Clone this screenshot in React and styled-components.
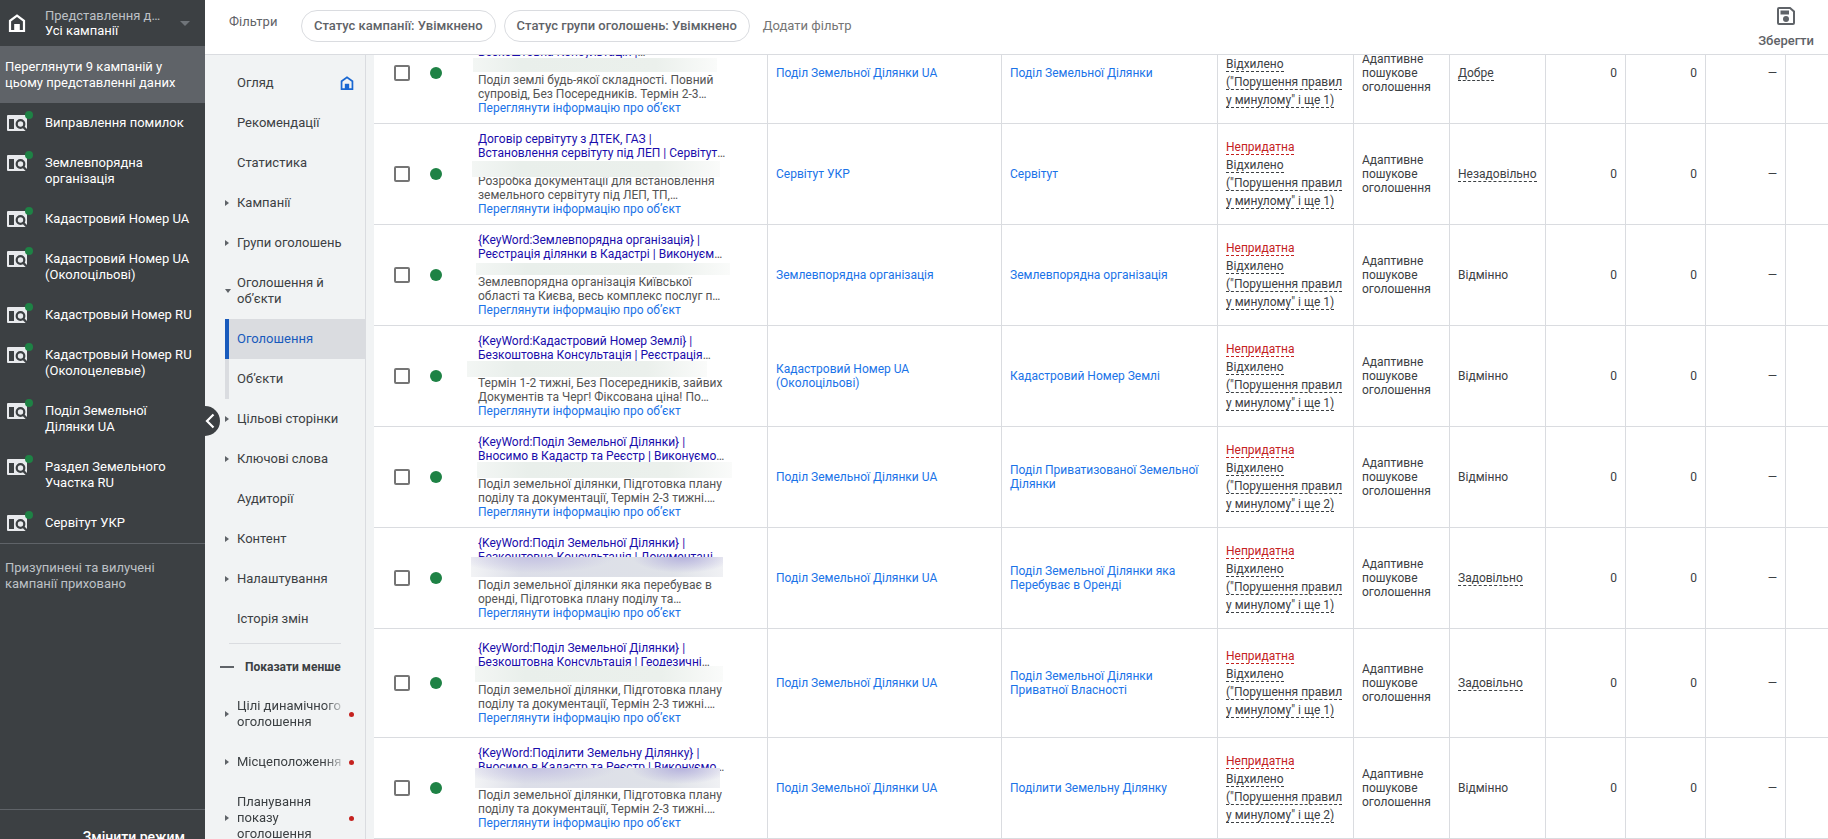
import React from "react";
import styled, { createGlobalStyle, css } from "styled-components";

const campaigns = [
  ["Виправлення помилок"],
  ["Землевпорядна", "організація"],
  ["Кадастровий Номер UA"],
  ["Кадастровий Номер UA", "(Околоцільові)"],
  ["Кадастровый Номер RU"],
  ["Кадастровый Номер RU", "(Околоцелевые)"],
  ["Поділ Земельної", "Ділянки UA"],
  ["Раздел Земельного", "Участка RU"],
  ["Сервітут УКР"],
];

const pages = [
  { label: ["Огляд"], home: true },
  { label: ["Рекомендації"] },
  { label: ["Статистика"] },
  { label: ["Кампанії"], arrow: "right" },
  { label: ["Групи оголошень"], arrow: "right" },
  { label: ["Оголошення й", "об’єкти"], arrow: "down" },
  { label: ["Оголошення"], child: true, active: true },
  { label: ["Об’єкти"], child: true },
  { label: ["Цільові сторінки"], arrow: "right" },
  { label: ["Ключові слова"], arrow: "right" },
  { label: ["Аудиторії"] },
  { label: ["Контент"], arrow: "right" },
  { label: ["Налаштування"], arrow: "right" },
  { label: ["Історія змін"] },
];

const morePages = [
  { label: ["Цілі динамічного", "оголошення"], arrow: "right", isNew: true },
  { label: ["Місцеположення"], arrow: "right", isNew: true },
  { label: ["Планування", "показу", "оголошення"], arrow: "right", isNew: true },
];

const ads = [
  {
    title: ["{KeyWord:Поділ Землі} |", "Безкоштовна Консультація |"],
    text: ["Поділ землі будь-якої складності. Повний", "супровід, Без Посередників. Термін 2-3…"],
    campaign: ["Поділ Земельної Ділянки UA"],
    group: ["Поділ Земельної Ділянки"],
    more: 1,
    strength: "Добре",
    hint: true,
    patch: { x: -5, y: 27, w: 244, h: 14 },
  },
  {
    title: ["Договір сервітуту з ДТЕК, ГАЗ |", "Встановлення сервітуту під ЛЕП | Сервітут"],
    text: ["Розробка документації для встановлення", "земельного сервітуту під ЛЕП, ТП,…"],
    campaign: ["Сервітут УКР"],
    group: ["Сервітут"],
    more: 1,
    strength: "Незадовільно",
    hint: true,
    patch: { x: -6, y: 29, w: 248, h: 16 },
  },
  {
    title: ["{KeyWord:Землевпорядна організація} |", "Реєстрація ділянки в Кадастрі | Виконуєм"],
    text: ["Землевпорядна організація Київської", "області та Києва, весь комплекс послуг п…"],
    campaign: ["Землевпорядна організація"],
    group: ["Землевпорядна організація"],
    more: 1,
    strength: "Відмінно",
    patch: { x: -2, y: 30, w: 254, h: 12 },
  },
  {
    title: ["{KeyWord:Кадастровий Номер Землі} |", "Безкоштовна Консультація | Реєстрація"],
    text: ["Термін 1-2 тижні, Без Посередників, зайвих", "Документів та Черг! Фіксована ціна! По…"],
    campaign: ["Кадастровий Номер UA", "(Околоцільові)"],
    group: ["Кадастровий Номер Землі"],
    more: 1,
    strength: "Відмінно",
    patch: { x: -11, y: 27, w: 240, h: 16 },
  },
  {
    title: ["{KeyWord:Поділ Земельної Ділянки} |", "Вносимо в Кадастр та Реєстр | Виконуємо"],
    text: ["Поділ земельної ділянки, Підготовка плану", "поділу та документації, Термін 2-3 тижні.…"],
    campaign: ["Поділ Земельної Ділянки UA"],
    group: ["Поділ Приватизованої Земельної", "Ділянки"],
    more: 2,
    strength: "Відмінно",
    patch: { x: -1, y: 27, w: 255, h: 16 },
  },
  {
    title: ["{KeyWord:Поділ Земельної Ділянки} |", "Безкоштовна Консультація | Документаці"],
    text: ["Поділ земельної ділянки яка перебуває в", "оренді, Підготовка плану поділу та…"],
    campaign: ["Поділ Земельної Ділянки UA"],
    group: ["Поділ Земельної Ділянки яка", "Перебуває в Оренді"],
    more: 1,
    strength: "Задовільно",
    hint: true,
    patch: { x: -7, y: 21, w: 252, h: 20, violet: true },
  },
  {
    title: ["{KeyWord:Поділ Земельної Ділянки} |", "Безкоштовна Консультація | Геодезичні"],
    text: ["Поділ земельної ділянки, Підготовка плану", "поділу та документації, Термін 2-3 тижні.…"],
    campaign: ["Поділ Земельної Ділянки UA"],
    group: ["Поділ Земельної Ділянки", "Приватної Власності"],
    more: 1,
    strength: "Задовільно",
    hint: true,
    tall: true,
    patch: { x: -3, y: 25, w: 248, h: 16 },
  },
  {
    title: ["{KeyWord:Поділити Земельну Ділянку} |", "Вносимо в Кадастр та Реєстр | Виконуємо"],
    text: ["Поділ земельної ділянки, Підготовка плану", "поділу та документації, Термін 2-3 тижні.…"],
    campaign: ["Поділ Земельної Ділянки UA"],
    group: ["Поділити Земельну Ділянку"],
    more: 2,
    strength: "Відмінно",
    patch: { x: -3, y: 22, w: 245, h: 20, violet: true },
  },
];

const Lines = ({ items }) => items.map((line) => <Line key={line}>{line}</Line>);

const HomeIcon = ({ size }) => (
  <svg width={size} height={size} viewBox="0 0 18 18" fill="none" aria-hidden="true">
    <path d="M2 17V6.8L9 1.6l7 5.2V17z" stroke="currentColor" strokeWidth="2.2" />
    <path d="M6.2 10h5.6v7H6.2z" fill="currentColor" />
  </svg>
);

const SearchCampaignIcon = () => (
  <svg width="26" height="21" viewBox="0 0 26 21" aria-hidden="true">
    <rect x="0" y="4" width="20" height="16" rx="1" fill="#e8eaed" />
    <path d="M2 8h5v10H2z" fill="#3c4043" />
    <circle cx="13.5" cy="13" r="3.8" fill="none" stroke="#3c4043" strokeWidth="2.2" />
    <path d="M16 15.700L20.300 20" stroke="#3c4043" strokeWidth="2.400" />
    <circle cx="22" cy="4" r="4" fill="#1e8245" />
  </svg>
);

const SaveIcon = () => (
  <svg width="18" height="18" viewBox="0 0 18 18" aria-hidden="true">
    <path
      d="M2 1h11l4 3.500V16a1 1 0 0 1-1 1H2a1 1 0 0 1-1-1V2a1 1 0 0 1 1-1z"
      fill="none"
      stroke="#5f6368"
      strokeWidth="2"
    />
    <path d="M3.500 3.500h8.500v4H3.500z" fill="#5f6368" />
    <circle cx="9" cy="12" r="3" fill="#5f6368" />
  </svg>
);

function NavItem({ page }) {
  return (
    <PageLink href="#" $active={page.active} $child={page.child}>
      <ArrowSlot>{page.arrow && <Arrow $down={page.arrow === "down"} />}</ArrowSlot>
      <PageLabel $fade={page.isNew}>
        <Lines items={page.label} />
      </PageLabel>
      {page.home && (
        <HomeMark>
          <HomeIcon size={14} />
        </HomeMark>
      )}
      {page.isNew && <NewDot />}
    </PageLink>
  );
}

function AdRow({ ad }) {
  return (
    <Row $tall={ad.tall}>
      <Cell>
        <AdCell>
          <Check type="checkbox" aria-label={ad.title[0]} />
          <EnabledDot />
          <Preview>
            <Title href="#">
              <Line>{ad.title[0]}</Line>
              <Line>
                {ad.title[1]}
                <Rest>…</Rest>
              </Line>
            </Title>
            <HiddenUrl />
            <Lines items={ad.text} />
            <Link href="#">Переглянути інформацію про об’єкт</Link>
            <Patch
              $x={ad.patch.x}
              $y={ad.patch.y}
              $w={ad.patch.w}
              $h={ad.patch.h}
              $violet={ad.patch.violet}
            />
          </Preview>
        </AdCell>
      </Cell>
      <Cell>
        <Link href="#">
          <Lines items={ad.campaign} />
        </Link>
      </Cell>
      <Cell>
        <Link href="#">
          <Lines items={ad.group} />
        </Link>
      </Cell>
      <Cell>
        <Status>
          <Dashed $bad>Непридатна</Dashed>
          <br />
          <Dashed>
            Відхилено
            <br />
            ("Порушення правил
            <br />у минулому" і ще {ad.more})
          </Dashed>
        </Status>
      </Cell>
      <Cell>
        <Lines items={["Адаптивне", "пошукове", "оголошення"]} />
      </Cell>
      <Cell>{ad.hint ? <Dashed>{ad.strength}</Dashed> : ad.strength}</Cell>
      <Cell $right>0</Cell>
      <Cell $right>0</Cell>
      <Cell $right>—</Cell>
      <Cell />
    </Row>
  );
}

function App() {
  return (
    <Page>
      <GlobalStyle />
      <Sidebar>
        <ViewPicker type="button">
          <HomeIcon size={18} />
          <ViewNames>
            <ViewHint>Представлення д…</ViewHint>
            <Line>Усі кампанії</Line>
          </ViewNames>
          <Caret />
        </ViewPicker>
        <ViewAll href="#">
          <Lines items={["Переглянути 9 кампаній у", "цьому представленні даних"]} />
        </ViewAll>
        <CampaignList>
          {campaigns.map((lines) => (
            <li key={lines.join(" ")}>
              <Campaign href="#">
                <SearchCampaignIcon />
                <CampaignName>
                  <Lines items={lines} />
                </CampaignName>
              </Campaign>
            </li>
          ))}
        </CampaignList>
        <PausedNote>
          <Lines items={["Призупинені та вилучені", "кампанії приховано"]} />
        </PausedNote>
        <ModeButton type="button">Змінити режим</ModeButton>
        <Collapse type="button" aria-label="Згорнути">
          <svg width="10" height="16" viewBox="0 0 10 16" aria-hidden="true">
            <path d="M8.500 1.500L2 8l6.500 6.500" fill="none" stroke="#fff" strokeWidth="2.200" />
          </svg>
        </Collapse>
      </Sidebar>

      <Main>
        <FilterBar>
          <FilterLabel>Фільтри</FilterLabel>
          <Chip type="button">Статус кампанії: Увімкнено</Chip>
          <Chip type="button">Статус групи оголошень: Увімкнено</Chip>
          <AddFilter type="button">Додати фільтр</AddFilter>
          <Save type="button">
            <SaveIcon />
            Зберегти
          </Save>
        </FilterBar>

        <Body>
          <PageNav>
            {pages.map((page) => (
              <NavItem key={page.label[0]} page={page} />
            ))}
            <NavDivider />
            <ShowLess type="button">
              <Minus />
              Показати менше
            </ShowLess>
            {morePages.map((page) => (
              <NavItem key={page.label[0]} page={page} />
            ))}
          </PageNav>
          <TableArea>
            <Table>
              <colgroup>
                <Col $w={394} />
                <Col $w={234} />
                <Col $w={216} />
                <Col $w={136} />
                <Col $w={96} />
                <Col $w={96} />
                <Col $w={80} />
                <Col $w={80} />
                <Col $w={80} />
                <col />
              </colgroup>
              <tbody>
                {ads.map((ad, i) => (
                  <AdRow key={i} ad={ad} />
                ))}
              </tbody>
            </Table>
          </TableArea>
        </Body>
      </Main>
    </Page>
  );
}

export default App;

///////////////////////////////////////////////////////////////////////////
//////  STYLED COMPONENTS

const GlobalStyle = createGlobalStyle`
  * {
    box-sizing: border-box;
  }

  body {
    margin: 0;
    font-family: Roboto, "Noto Sans", sans-serif;
    font-size: 13px;
    line-height: 16px;
    color: #3c4043;
    background: #fff;
    overflow: hidden;
  }

  a {
    color: inherit;
    text-decoration: none;
  }

  button {
    font: inherit;
    color: inherit;
    background: none;
    border: 0;
    padding: 0;
    cursor: pointer;
  }
`;

const Page = styled.div`
  display: flex;
  height: 100vh;
  overflow: hidden;
`;

const Line = styled.span`
  display: block;
  white-space: nowrap;
`;

const Sidebar = styled.aside`
  position: relative;
  z-index: 1;
  flex: none;
  width: 205px;
  display: flex;
  flex-direction: column;
  color: #fff;
  background: #3c4043;
`;

const ViewPicker = styled.button`
  flex: none;
  height: 46px;
  padding: 0 15px 0 8px;
  display: flex;
  align-items: center;
  text-align: left;
`;

const ViewNames = styled.span`
  flex: 1;
  margin-left: 19px;
  line-height: 15px;
`;

const ViewHint = styled(Line)`
  color: #bdc1c6;
`;

const Caret = styled.span`
  border: 5px solid transparent;
  border-top-color: #70757a;
  border-bottom: 0;
`;

const ViewAll = styled.a`
  flex: none;
  padding: 13px 5px 12px;
  background: #5f6368;
`;

const CampaignList = styled.ul`
  flex: none;
  margin: 0;
  padding: 0;
  list-style: none;
  border-bottom: 1px solid #5f6368;
`;

const Campaign = styled.a`
  display: flex;
  align-items: flex-start;
  padding: 8px 7px;
`;

const CampaignName = styled.span`
  margin-left: 12px;
  padding: 4px 0;
`;

const PausedNote = styled.p`
  margin: 0;
  padding: 16px 5px;
  color: #bdc1c6;
`;

const ModeButton = styled.button`
  flex: none;
  height: 30px;
  margin-top: auto;
  padding: 17px 20px 0 0;
  border-top: 1px solid #5f6368;
  font-size: 14px;
  font-weight: 500;
  line-height: 20px;
  text-align: right;
  overflow: hidden;
`;

/* half circle that hangs over the page navigation */
const Collapse = styled.button`
  position: absolute;
  top: 406px;
  left: 100%;
  width: 15px;
  height: 30px;
  display: flex;
  align-items: center;
  border-radius: 0 15px 15px 0;
  background: #3c4043;
`;

const Main = styled.main`
  flex: 1;
  min-width: 0;
  display: flex;
  flex-direction: column;
`;

const FilterBar = styled.header`
  flex: none;
  height: 55px;
  padding: 0 14px 0 24px;
  display: flex;
  align-items: flex-start;
  gap: 8px;
  color: #5f6368;
  border-bottom: 1px solid #dadce0;
`;

const FilterLabel = styled.span`
  width: 64px;
  padding-top: 14px;
`;

const Chip = styled.button`
  height: 32px;
  margin-top: 10px;
  padding: 0 12px;
  border: 1px solid #dadce0;
  border-radius: 16px;
  font-weight: 500;
  white-space: nowrap;
`;

const AddFilter = styled.button`
  margin: 18px 0 0 5px;
  white-space: nowrap;
  color: #757575;
`;

const Save = styled.button`
  margin-left: auto;
  padding-top: 7px;
  display: flex;
  flex-direction: column;
  align-items: center;
  gap: 8px;
  font-weight: 500;
`;

const Body = styled.div`
  flex: 1;
  min-height: 0;
  display: flex;
  background: #f1f3f4;
`;

const PageNav = styled.nav`
  flex: none;
  width: 161px;
  padding-top: 8px;
  border-right: 1px solid #dadce0;
  overflow: hidden;
`;

const PageLink = styled.a`
  display: flex;
  align-items: center;
  margin-left: 20px;
  padding: 12px 11px 12px 0;
  ${({ $child }) =>
    $child &&
    css`
      box-shadow: inset 4px 0 #dadce0;
    `}
  ${({ $active }) =>
    $active &&
    css`
      color: #185abc;
      background: #dadce0;
      box-shadow: inset 4px 0 #185abc;
    `}
`;

const ArrowSlot = styled.span`
  flex: none;
  width: 12px;
`;

const Arrow = styled.span`
  display: block;
  width: 0;
  border: 0 solid transparent;
  ${({ $down }) =>
    $down
      ? css`
          border-width: 4px 3px 0;
          border-top-color: #5f6368;
        `
      : css`
          border-width: 3px 0 3px 4px;
          border-left-color: #5f6368;
        `}
`;

const PageLabel = styled.span`
  ${({ $fade }) =>
    $fade &&
    css`
      width: 104px;
      overflow: hidden;
      mask-image: linear-gradient(to right, #000 88px, transparent 110px);
    `}
`;

const HomeMark = styled.span`
  display: flex;
  margin-left: auto;
  color: #1967d2;
`;

const NewDot = styled.span`
  width: 5px;
  height: 5px;
  margin-left: auto;
  border-radius: 50%;
  background: #c5221f;
`;

const NavDivider = styled.hr`
  height: 1px;
  margin: 4px 24px 3px;
  border: 0;
  background: #dadce0;
`;

const ShowLess = styled.button`
  display: flex;
  align-items: center;
  height: 39px;
  margin-left: 15px;
  font-size: 12px;
  font-weight: 700;
  white-space: nowrap;
`;

const Minus = styled.span`
  width: 14px;
  height: 2px;
  margin-right: 11px;
  background: #5f6368;
`;

const TableArea = styled.section`
  flex: 1;
  min-width: 0;
  margin-left: 8px;
  overflow: hidden;
  background: #fff;
`;

/* scrolled part of the way down its first row */
const Table = styled.table`
  width: 100%;
  margin-top: -32px;
  table-layout: fixed;
  border-collapse: separate;
  border-spacing: 0;
  font-size: 12px;
  line-height: 14px;
`;

const Col = styled.col`
  width: ${({ $w }) => $w}px;
`;

const Row = styled.tr`
  height: ${({ $tall }) => ($tall ? 109 : 101)}px;
`;

const Cell = styled.td`
  padding: 0 8px;
  vertical-align: middle;
  text-align: ${({ $right }) => ($right ? "right" : "left")};
  border-right: 1px solid #dadce0;
  border-bottom: 1px solid #dadce0;

  &:last-child {
    border-right: 0;
  }
`;

const AdCell = styled.div`
  display: flex;
  align-items: center;
  padding-left: 12px;
`;

const Check = styled.input`
  appearance: none;
  flex: none;
  width: 16px;
  height: 16px;
  margin: 0 20px 0 0;
  border: 2px solid #757575;
  border-radius: 2px;
`;

const EnabledDot = styled.span`
  flex: none;
  width: 12px;
  height: 12px;
  margin-right: 36px;
  border-radius: 50%;
  background: #1e8245;
`;

const Preview = styled.div`
  position: relative;
  color: #545454;
`;

const Title = styled.a`
  color: #1a0dab;
`;

const Rest = styled.span`
  color: #545454;
`;

const HiddenUrl = styled.div`
  height: 14px;
`;

const Link = styled.a`
  color: #1a73e8;
`;

/* smear that covers the display URL */
const Patch = styled.div`
  position: absolute;
  left: ${({ $x }) => $x}px;
  top: ${({ $y }) => $y}px;
  width: ${({ $w }) => $w}px;
  height: ${({ $h }) => $h}px;
  background: ${({ $violet }) =>
    $violet
      ? `radial-gradient(ellipse 50px 16px at 84% 0, #b5b2dd, transparent),
         radial-gradient(ellipse 80px 16px at 25% 0, #c4c2e2, transparent),
         linear-gradient(to right, #f2f3f5, #dcdee8 20%, #dfe2e8 80%, #f0f1f4)`
      : "linear-gradient(to right, #f3f6f4, #e9efeb 20%, #ebf0ec 75%, #fafbfa)"};
`;

const Status = styled.div`
  line-height: 18px;
  white-space: nowrap;
`;

const Dashed = styled.span`
  color: ${({ $bad }) => ($bad ? "#c5221f" : "inherit")};
  border-bottom: 1px dashed currentColor;
`;
